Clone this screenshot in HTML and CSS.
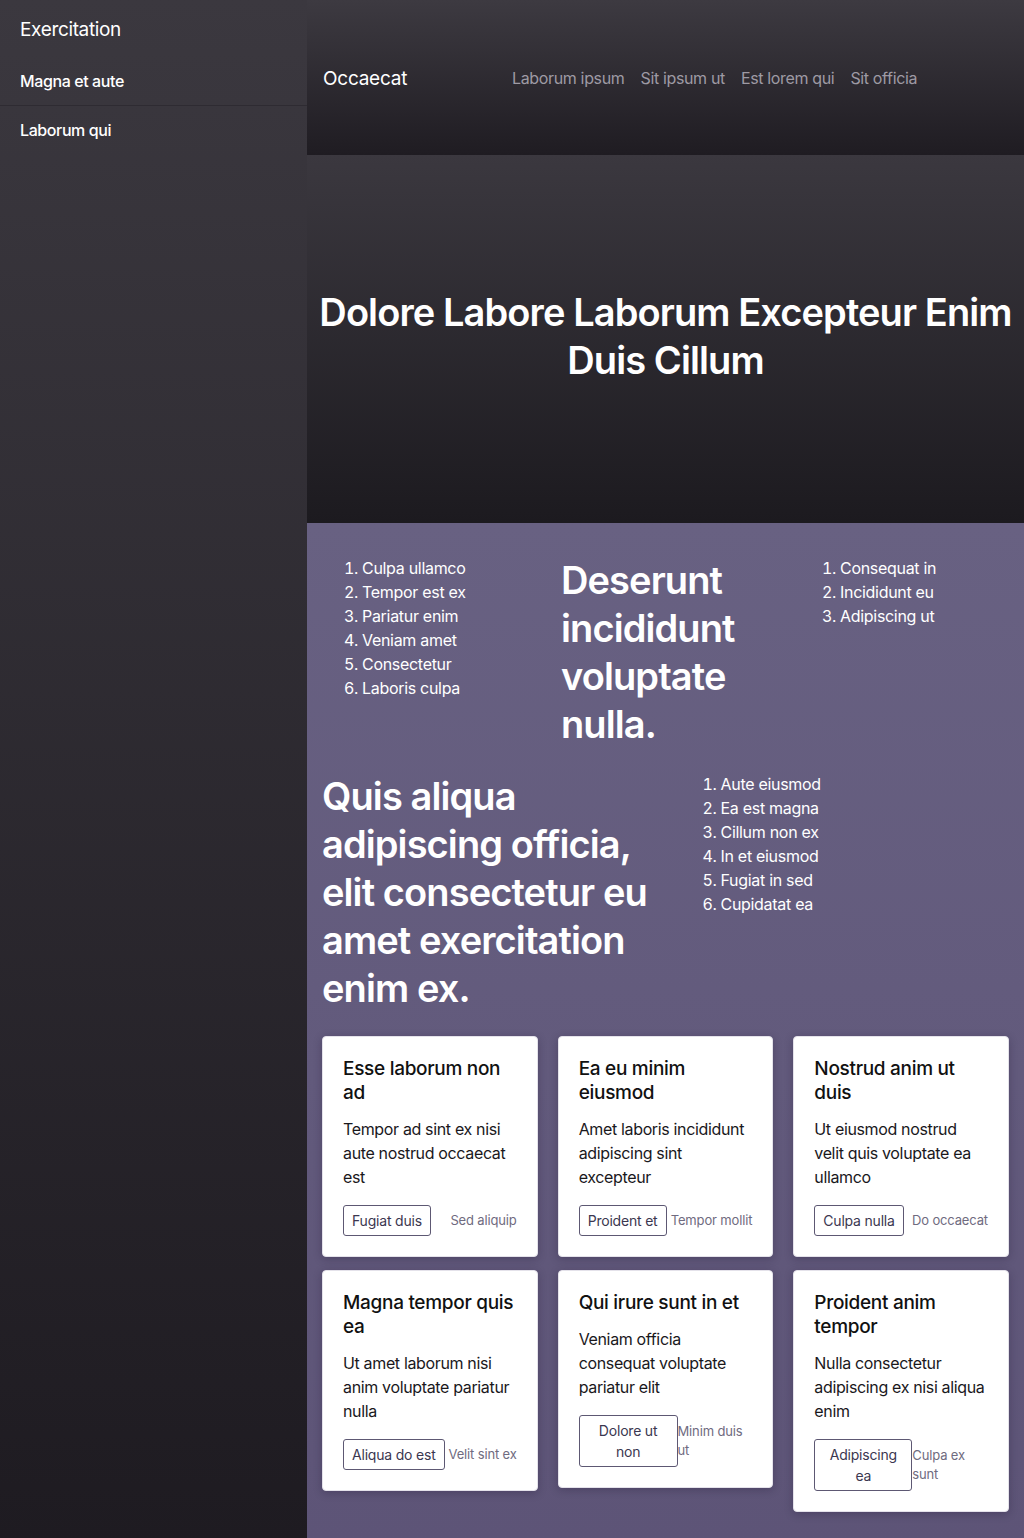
FILE: index.html
```html
<!DOCTYPE html>
<html lang="en">
<head>
<meta charset="utf-8">
<title>Occaecat</title>
<link rel="stylesheet" href="styles.css">
</head>
<body>
<div class="layout">
  <aside class="sidebar">
    <div class="side-brand">Exercitation</div>
    <a class="side-item side-item-sep" href="#">Magna et aute</a>
    <a class="side-item" href="#">Laborum qui</a>
  </aside>
  <main class="main">
    <header class="topbar">
      <div class="brand">Occaecat</div>
      <nav class="nav">
        <a href="#">Laborum ipsum</a>
        <a href="#">Sit ipsum ut</a>
        <a href="#">Est lorem qui</a>
        <a href="#">Sit officia</a>
      </nav>
    </header>
    <section class="hero">
      <h1>Dolore Labore Laborum Excepteur Enim Duis Cillum</h1>
    </section>
    <section class="content">
      <div class="row3">
        <ol class="list">
          <li>Culpa ullamco</li>
          <li>Tempor est ex</li>
          <li>Pariatur enim</li>
          <li>Veniam amet</li>
          <li>Consectetur</li>
          <li>Laboris culpa</li>
        </ol>
        <h2 class="big">Deserunt incididunt voluptate nulla.</h2>
        <ol class="list">
          <li>Consequat in</li>
          <li>Incididunt eu</li>
          <li>Adipiscing ut</li>
        </ol>
      </div>
      <div class="row2">
        <h2 class="big">Quis aliqua adipiscing officia, elit consectetur eu amet exercitation enim ex.</h2>
        <ol class="list">
          <li>Aute eiusmod</li>
          <li>Ea est magna</li>
          <li>Cillum non ex</li>
          <li>In et eiusmod</li>
          <li>Fugiat in sed</li>
          <li>Cupidatat ea</li>
        </ol>
      </div>
      <div class="cards">
        <div class="card">
          <h3>Esse laborum non ad</h3>
          <p>Tempor ad sint ex nisi aute nostrud occaecat est</p>
          <div class="actions"><button class="btn">Fugiat duis</button><a class="link" href="#">Sed aliquip</a></div>
        </div>
        <div class="card">
          <h3>Ea eu minim eiusmod</h3>
          <p>Amet laboris incididunt adipiscing sint excepteur</p>
          <div class="actions"><button class="btn">Proident et</button><a class="link" href="#">Tempor mollit</a></div>
        </div>
        <div class="card">
          <h3>Nostrud anim ut duis</h3>
          <p>Ut eiusmod nostrud velit quis voluptate ea ullamco</p>
          <div class="actions"><button class="btn">Culpa nulla</button><a class="link" href="#">Do occaecat</a></div>
        </div>
        <div class="card">
          <h3>Magna tempor quis ea</h3>
          <p>Ut amet laborum nisi anim voluptate pariatur nulla</p>
          <div class="actions"><button class="btn">Aliqua do est</button><a class="link" href="#">Velit sint ex</a></div>
        </div>
        <div class="card">
          <h3>Qui irure sunt in et</h3>
          <p>Veniam officia consequat voluptate pariatur elit</p>
          <div class="actions"><button class="btn">Dolore ut non</button><a class="link" href="#">Minim duis ut</a></div>
        </div>
        <div class="card">
          <h3>Proident anim tempor</h3>
          <p>Nulla consectetur adipiscing ex nisi aliqua enim</p>
          <div class="actions"><button class="btn">Adipiscing ea</button><a class="link" href="#">Culpa ex sunt</a></div>
        </div>
      </div>
    </section>
  </main>
</div>
</body>
</html>
```
FILE: styles.css
```css
* { box-sizing: border-box; }
html, body { margin: 0; padding: 0; }
body {
  font-family: Inter, "Noto Sans", "Liberation Sans", sans-serif;
  color: #fff;
  background: #1e1b21;
}
a { text-decoration: none; color: inherit; }

.layout {
  display: flex;
  min-height: 1538px;
}

.sidebar {
  width: 307px;
  flex: 0 0 307px;
  background: linear-gradient(180deg, #3b383f 0%, #1e1b21 100%);
  display: flex;
  flex-direction: column;
}
.side-brand {
  font-size: 19px;
  line-height: 25px;
  padding: 17px 20px 15px;
  color: #fff;
  letter-spacing: -0.35px;
}
.side-item {
  font-size: 16px;
  font-weight: 500;
  line-height: 24px;
  padding: 12px 20px;
  color: #fff;
  letter-spacing: -0.4px;
}
.side-item-sep { border-bottom: 1px solid #2e2b32; }

.main {
  flex: 1;
  display: flex;
  flex-direction: column;
  min-width: 0;
}

.topbar {
  height: 155px;
  background: linear-gradient(180deg, #3d3a41 0%, #1f1c22 100%);
  display: flex;
  align-items: center;
  padding: 0 16px;
}
.brand {
  width: 189px;
  font-size: 19px;
  line-height: 24px;
  color: #fff;
  letter-spacing: -0.25px;
  margin-top: 2px;
}
.nav {
  display: flex;
  gap: 16px;
  font-size: 16px;
  line-height: 24px;
  letter-spacing: -0.35px;
}
.nav a { color: #9e9aa4; }

.hero {
  height: 368px;
  background: linear-gradient(180deg, #3b383f 0%, #1c1a1f 100%);
  display: flex;
  align-items: center;
  justify-content: center;
  padding: 0 2px 6px;
}
.hero h1 {
  margin: 0;
  font-size: 38px;
  line-height: 48px;
  font-weight: 600;
  text-align: center;
  letter-spacing: -0.9px;
}

.content {
  flex: 1;
  background: linear-gradient(180deg, #686182 0%, #5d5477 100%);
  padding: 33px 15px 28px;
  display: flex;
  flex-direction: column;
}
.row3 {
  display: grid;
  grid-template-columns: repeat(3, 1fr);
  column-gap: 30px;
  align-items: start;
}
.row2 {
  display: grid;
  grid-template-columns: repeat(2, 1fr);
  column-gap: 30px;
  align-items: start;
  margin-top: 24px;
}
.list {
  margin: 0;
  padding-left: 40px;
  font-size: 16px;
  line-height: 24px;
  letter-spacing: -0.3px;
}
.big {
  margin: 0;
  font-size: 38px;
  line-height: 48px;
  font-weight: 600;
  letter-spacing: -0.9px;
}

.cards {
  margin-top: 24px;
  display: flex;
  flex-wrap: wrap;
  align-items: flex-start;
  column-gap: 20px;
  row-gap: 13px;
}
.card {
  width: calc((100% - 40px) / 3);
  background: #fff;
  border: 1px solid #e4e2ea;
  border-radius: 4px;
  box-shadow: 0 2px 8px rgba(20, 10, 40, 0.25);
  padding: 20px;
  color: #141216;
}
.card h3 {
  margin: 0;
  font-size: 19px;
  line-height: 24px;
  font-weight: 500;
  color: #111;
  letter-spacing: -0.3px;
}
.card p {
  margin: 12px 0 0;
  font-size: 16px;
  line-height: 24px;
  color: #1a181c;
  letter-spacing: -0.35px;
}
.actions {
  margin-top: 16px;
  display: flex;
  justify-content: space-between;
  align-items: center;
}
.btn {
  font-family: inherit;
  font-size: 14px;
  line-height: 21px;
  padding: 4px 8px;
  border: 1px solid #5d5873;
  border-radius: 3px;
  background: #fff;
  color: #3b3750;
  text-align: center;
  letter-spacing: -0.2px;
}
.link {
  font-size: 13px;
  line-height: 19px;
  color: #6f6b80;
  letter-spacing: -0.15px;
}
```
